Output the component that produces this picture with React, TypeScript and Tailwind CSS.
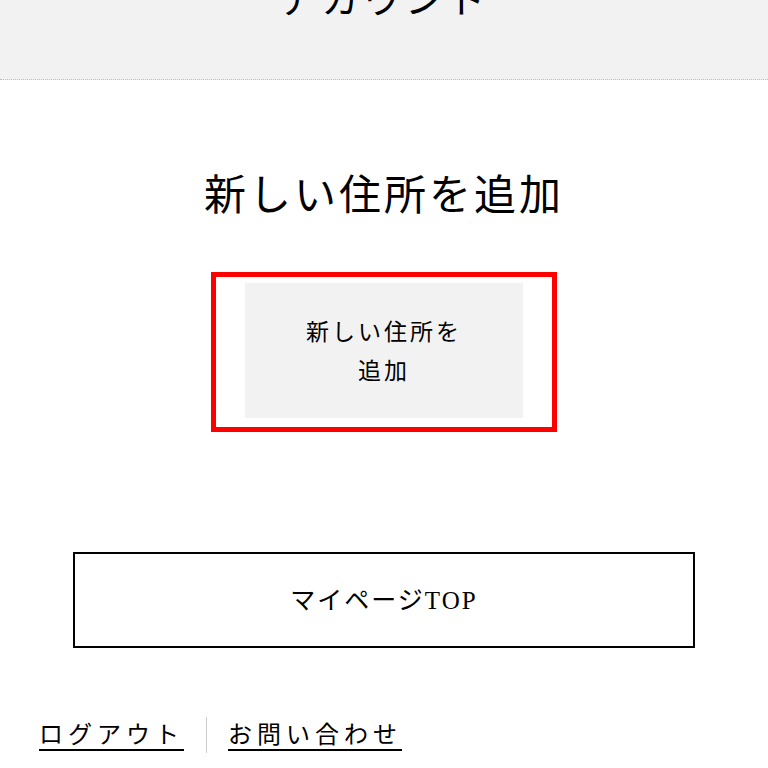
import React from 'react';

const serif = { fontFamily: '"Liberation Serif", "Noto Sans CJK JP", serif' };

export default function App() {
  return (
    <div className="min-h-[768px] w-[768px] overflow-hidden bg-white text-black" style={serif}>
      {/* ヘッダー（上部が切れている） */}
      <div className="flex h-[80px] justify-center overflow-hidden border-b border-dotted border-[#bdbdbd] bg-[#f2f2f2]">
        <span className="-mt-[23px] text-[38px] leading-[46px] tracking-[4px]">アカウント</span>
      </div>

      <div className="flex flex-col items-center">
        <h1 className="mt-[86px] text-[42px] leading-[60px] tracking-[3px]">新しい住所を追加</h1>

        <div className="mt-[46px] h-[160px] w-[346px] border-[5px] border-[#ff0000] px-[29px] pt-[6px] pb-[9px]">
          <button className="flex h-full w-full items-center justify-center bg-[#f2f2f2] pt-[3px] text-center text-[23px] leading-[39px] tracking-[3px]">
            新しい住所を
            <br />
            追加
          </button>
        </div>

        <button className="mt-[120px] flex h-[96px] w-[622px] items-center justify-center border-2 border-black pt-[2px] text-[25px] tracking-[2px]">
          マイページTOP
        </button>
      </div>

      <div className="mt-[69px] flex items-center pl-[39px]">
        <a className="text-[24px] leading-[36px] tracking-[5px] underline decoration-2 underline-offset-[6px]">ログアウト</a>
        <span className="ml-[22px] mr-[21px] h-[36px] w-px bg-[#cccccc]" />
        <a className="text-[24px] leading-[36px] tracking-[5px] underline decoration-2 underline-offset-[6px]">お問い合わせ</a>
      </div>
    </div>
  );
}
